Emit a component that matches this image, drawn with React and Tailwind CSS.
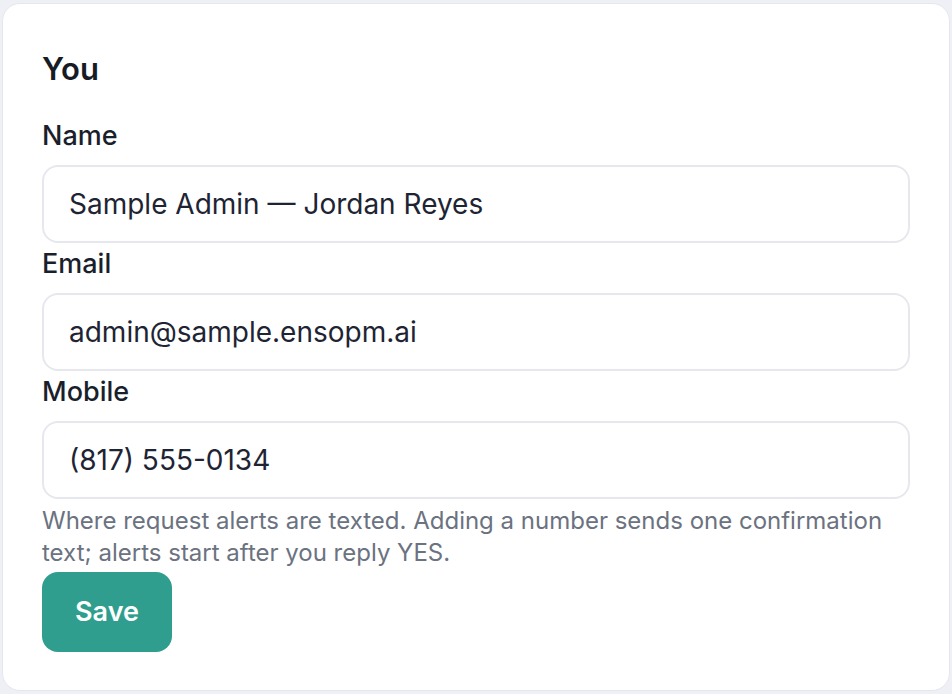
const fields = [
  { label: 'Name', type: 'text', value: 'Sample Admin — Jordan Reyes' },
  { label: 'Email', type: 'email', value: 'admin@sample.ensopm.ai' },
  { label: 'Mobile', type: 'tel', value: '(817) 555-0134' },
];

export default function App() {
  return (
    <div className="min-h-screen bg-[#eef0f5] pt-[3px] px-[2px] pb-[3px] font-['Inter','Noto_Sans',sans-serif]">
      <div className="bg-white border border-[#e4e7ee] rounded-[18px] px-[39px] pt-[46px] pb-[38px]">
        <h2 className="text-[31px] leading-[38px] font-semibold text-[#161b26]">You</h2>

        <div className="mt-[30px]">
          {fields.map((f) => (
            <div key={f.label} className="mt-[3px]">
              <label className="block text-[27px] leading-[36px] font-medium text-[#1a1f2c] mb-[11px]">
                {f.label}
              </label>
              <input
                type={f.type}
                defaultValue={f.value}
                className="block w-full h-[78px] rounded-[16px] border-2 border-[#e6e8ee] px-[25px] text-[28px] text-[#1e2433] outline-none"
              />
            </div>
          ))}
        </div>

        <p className="mt-[6px] text-[24px] leading-[32px] text-[#6b7280]">
          Where request alerts are texted. Adding a number sends one confirmation text; alerts start after you reply YES.
        </p>

        <button className="mt-[3px] h-[80px] w-[130px] rounded-[16px] bg-[#2f9e8e] text-white text-[27px] font-semibold">
          Save
        </button>
      </div>
    </div>
  );
}
